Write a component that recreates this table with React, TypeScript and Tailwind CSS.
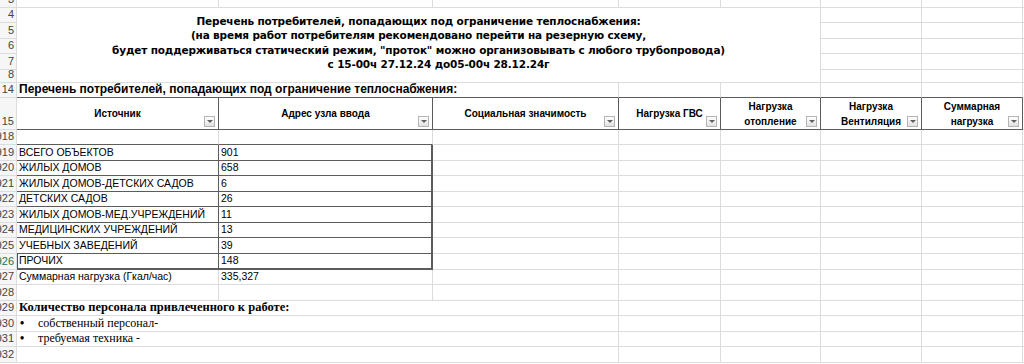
import type { ReactNode } from "react"

const grid = "border-[#dadcdd]"
const dark = "border-[#5c5c5c]"

function RowNum({ n, active = false }: { n: string; active?: boolean }) {
  return (
    <div
      className={`overflow-hidden border-b border-r ${grid} bg-[#f6f6f6] pr-[2px] text-right text-[11px] leading-[13px] pb-[1px] whitespace-nowrap font-['Liberation_Sans',sans-serif] flex items-end justify-end ${
        active ? "text-[#217346]" : "text-[#444]"
      }`}
    >
      {n}
    </div>
  )
}

function Cell({ className = "", children }: { className?: string; children?: ReactNode }) {
  return (
    <div
      className={`flex items-end overflow-hidden whitespace-nowrap border-b border-r px-[2px] text-[10.5px] leading-[15px] text-black font-['Liberation_Sans',sans-serif] ${className}`}
    >
      {children}
    </div>
  )
}

function FilterBtn() {
  return (
    <span className="absolute right-[3px] bottom-[2px] flex h-[11px] w-[11px] items-center justify-center border border-[#b4b4b4] bg-gradient-to-b from-white to-[#e2e2e2]">
      <span className="h-0 w-0 border-x-[3px] border-t-[3px] border-x-transparent border-t-[#606060]" />
    </span>
  )
}

function HeadCell({ children }: { children: ReactNode }) {
  return (
    <div
      className={`relative flex items-center justify-center border-b border-r ${dark} px-[14px] text-center text-[10px] font-bold leading-[15px] text-black font-['Liberation_Sans',sans-serif]`}
    >
      <span>{children}</span>
      <FilterBtn />
    </div>
  )
}

const counts: [string, string][] = [
  ["ВСЕГО ОБЪЕКТОВ", "901"],
  ["ЖИЛЫХ ДОМОВ", "658"],
  ["ЖИЛЫХ ДОМОВ-ДЕТСКИХ САДОВ", "6"],
  ["ДЕТСКИХ САДОВ", "26"],
  ["ЖИЛЫХ ДОМОВ-МЕД.УЧРЕЖДЕНИЙ", "11"],
  ["МЕДИЦИНСКИХ УЧРЕЖДЕНИЙ", "13"],
  ["УЧЕБНЫХ ЗАВЕДЕНИЙ", "39"],
  ["ПРОЧИХ", "148"],
]

function Rest() {
  // empty cells of columns D..G and the sliver after G
  return (
    <>
      {[0, 1, 2, 3].map((c) => (
        <Cell key={c} className={grid} />
      ))}
      <div className={`border-b ${grid}`} />
    </>
  )
}

export default function App() {
  return (
    <div className="h-[364px] w-[1024px] overflow-hidden bg-white">
      <div className="grid grid-cols-[17px_202px_214px_186px_102px_100px_101px_101px_1fr] grid-rows-[8px_15px_16px_15px_16px_13px_15px_32px_15px_16px_15px_16px_15px_16px_15px_16px_16px_15px_16px_15px_16px_15px_16px]">
        {/* row 3 */}
        <RowNum n="3" />
        <Cell className={grid} />
        <Cell className={grid} />
        <Cell className={grid} />
        <Rest />

        {/* rows 4-8: merged title */}
        <RowNum n="4" />
        <div
          className={`col-span-5 row-span-5 flex flex-col items-center justify-center border-b border-r ${grid} pb-[5px] text-center text-[10.5px] font-bold leading-[14.5px] text-black font-['DejaVu_Sans',sans-serif] tracking-[-0.15px]`}
        >
          <div>Перечень потребителей, попадающих под ограничение теплоснабжения:</div>
          <div>(на время работ потребителям рекомендовано перейти на резерную схему,</div>
          <div>будет поддерживаться статический режим, "проток" можно организовывать с любого трубопровода)</div>
          <div className="pl-[40px]">с 15-00ч 27.12.24 до05-00ч 28.12.24г</div>
        </div>
        <Cell className={grid} />
        <Cell className={grid} />
        <div className={`border-b ${grid}`} />
        {["5", "6", "7", "8"].map((n) => (
          <div key={n} className="contents">
            <RowNum n={n} />
            <Cell className={grid} />
            <Cell className={grid} />
            <div className={`border-b ${grid}`} />
          </div>
        ))}

        {/* row 14 */}
        <RowNum n="14" />
        <Cell className={`col-span-3 ${grid} !border-b-[#5c5c5c] text-[12px] font-bold`}>
          Перечень потребителей, попадающих под ограничение теплоснабжения:
        </Cell>
        <Cell className={`${grid} !border-b-[#5c5c5c]`} />
        <Cell className={`${grid} !border-b-[#5c5c5c]`} />
        <Cell className={`${grid} !border-b-[#5c5c5c]`} />
        <Cell className={`${grid} !border-b-[#5c5c5c]`} />
        <div className={`border-b ${grid}`} />

        {/* row 15: table header */}
        <RowNum n="15" />
        <HeadCell>Источник</HeadCell>
        <HeadCell>Адрес узла ввода</HeadCell>
        <HeadCell>Социальная значимость</HeadCell>
        <HeadCell>Нагрузка ГВС</HeadCell>
        <HeadCell>
          Нагрузка
          <br />
          отопление
        </HeadCell>
        <HeadCell>
          Нагрузка
          <br />
          Вентиляция
        </HeadCell>
        <HeadCell>
          Суммарная
          <br />
          нагрузка
        </HeadCell>
        <div className={`border-b ${grid}`} />

        {/* row 18 */}
        <RowNum n="918" />
        <Cell className={`${grid} !border-b-[#5c5c5c]`} />
        <Cell className={`${grid} !border-b-[#5c5c5c]`} />
        <Cell className={grid} />
        <Rest />

        {/* rows 19-26: counts table */}
        {counts.map(([label, value], i) => {
          const last = i === counts.length - 1
          return (
            <div key={label} className="contents">
              <RowNum n={String(919 + i)} active={last} />
              <Cell
                className={`${dark} ${last ? "border-b-2 shadow-[inset_1px_0_0_#217346]" : ""}`}
              >
                {label}
              </Cell>
              <Cell className={`${dark} border-r-2 ${last ? "border-b-2" : ""}`}>{value}</Cell>
              <Cell className={grid} />
              <Rest />
            </div>
          )
        })}

        {/* row 27 */}
        <RowNum n="927" />
        <Cell className={grid}>Суммарная нагрузка (Гкал/час)</Cell>
        <Cell className={grid}>335,327</Cell>
        <Cell className={grid} />
        <Rest />

        {/* row 28 */}
        <RowNum n="928" />
        <Cell className={grid} />
        <Cell className={grid} />
        <Cell className={grid} />
        <Rest />

        {/* row 29 */}
        <RowNum n="929" />
        <Cell className={`col-span-3 ${grid} text-[12.5px] font-bold font-['Liberation_Serif',serif]`}>
          Количество персонала привлеченного к работе:
        </Cell>
        <Rest />

        {/* row 30 */}
        <RowNum n="930" />
        <Cell className={`col-span-3 ${grid} text-[12px] font-['Liberation_Serif',serif]`}>
          <span className="w-[19px] pl-[1px] font-bold">•</span>
          <span>собственный персонал-</span>
        </Cell>
        <Rest />

        {/* row 31 */}
        <RowNum n="931" />
        <Cell className={`col-span-3 ${grid} text-[12px] font-['Liberation_Serif',serif]`}>
          <span className="w-[19px] pl-[1px] font-bold">•</span>
          <span>требуемая техника -</span>
        </Cell>
        <Rest />

        {/* row 32 */}
        <RowNum n="932" />
        <Cell className={`col-span-3 ${grid}`} />
        <Rest />
      </div>
    </div>
  )
}
